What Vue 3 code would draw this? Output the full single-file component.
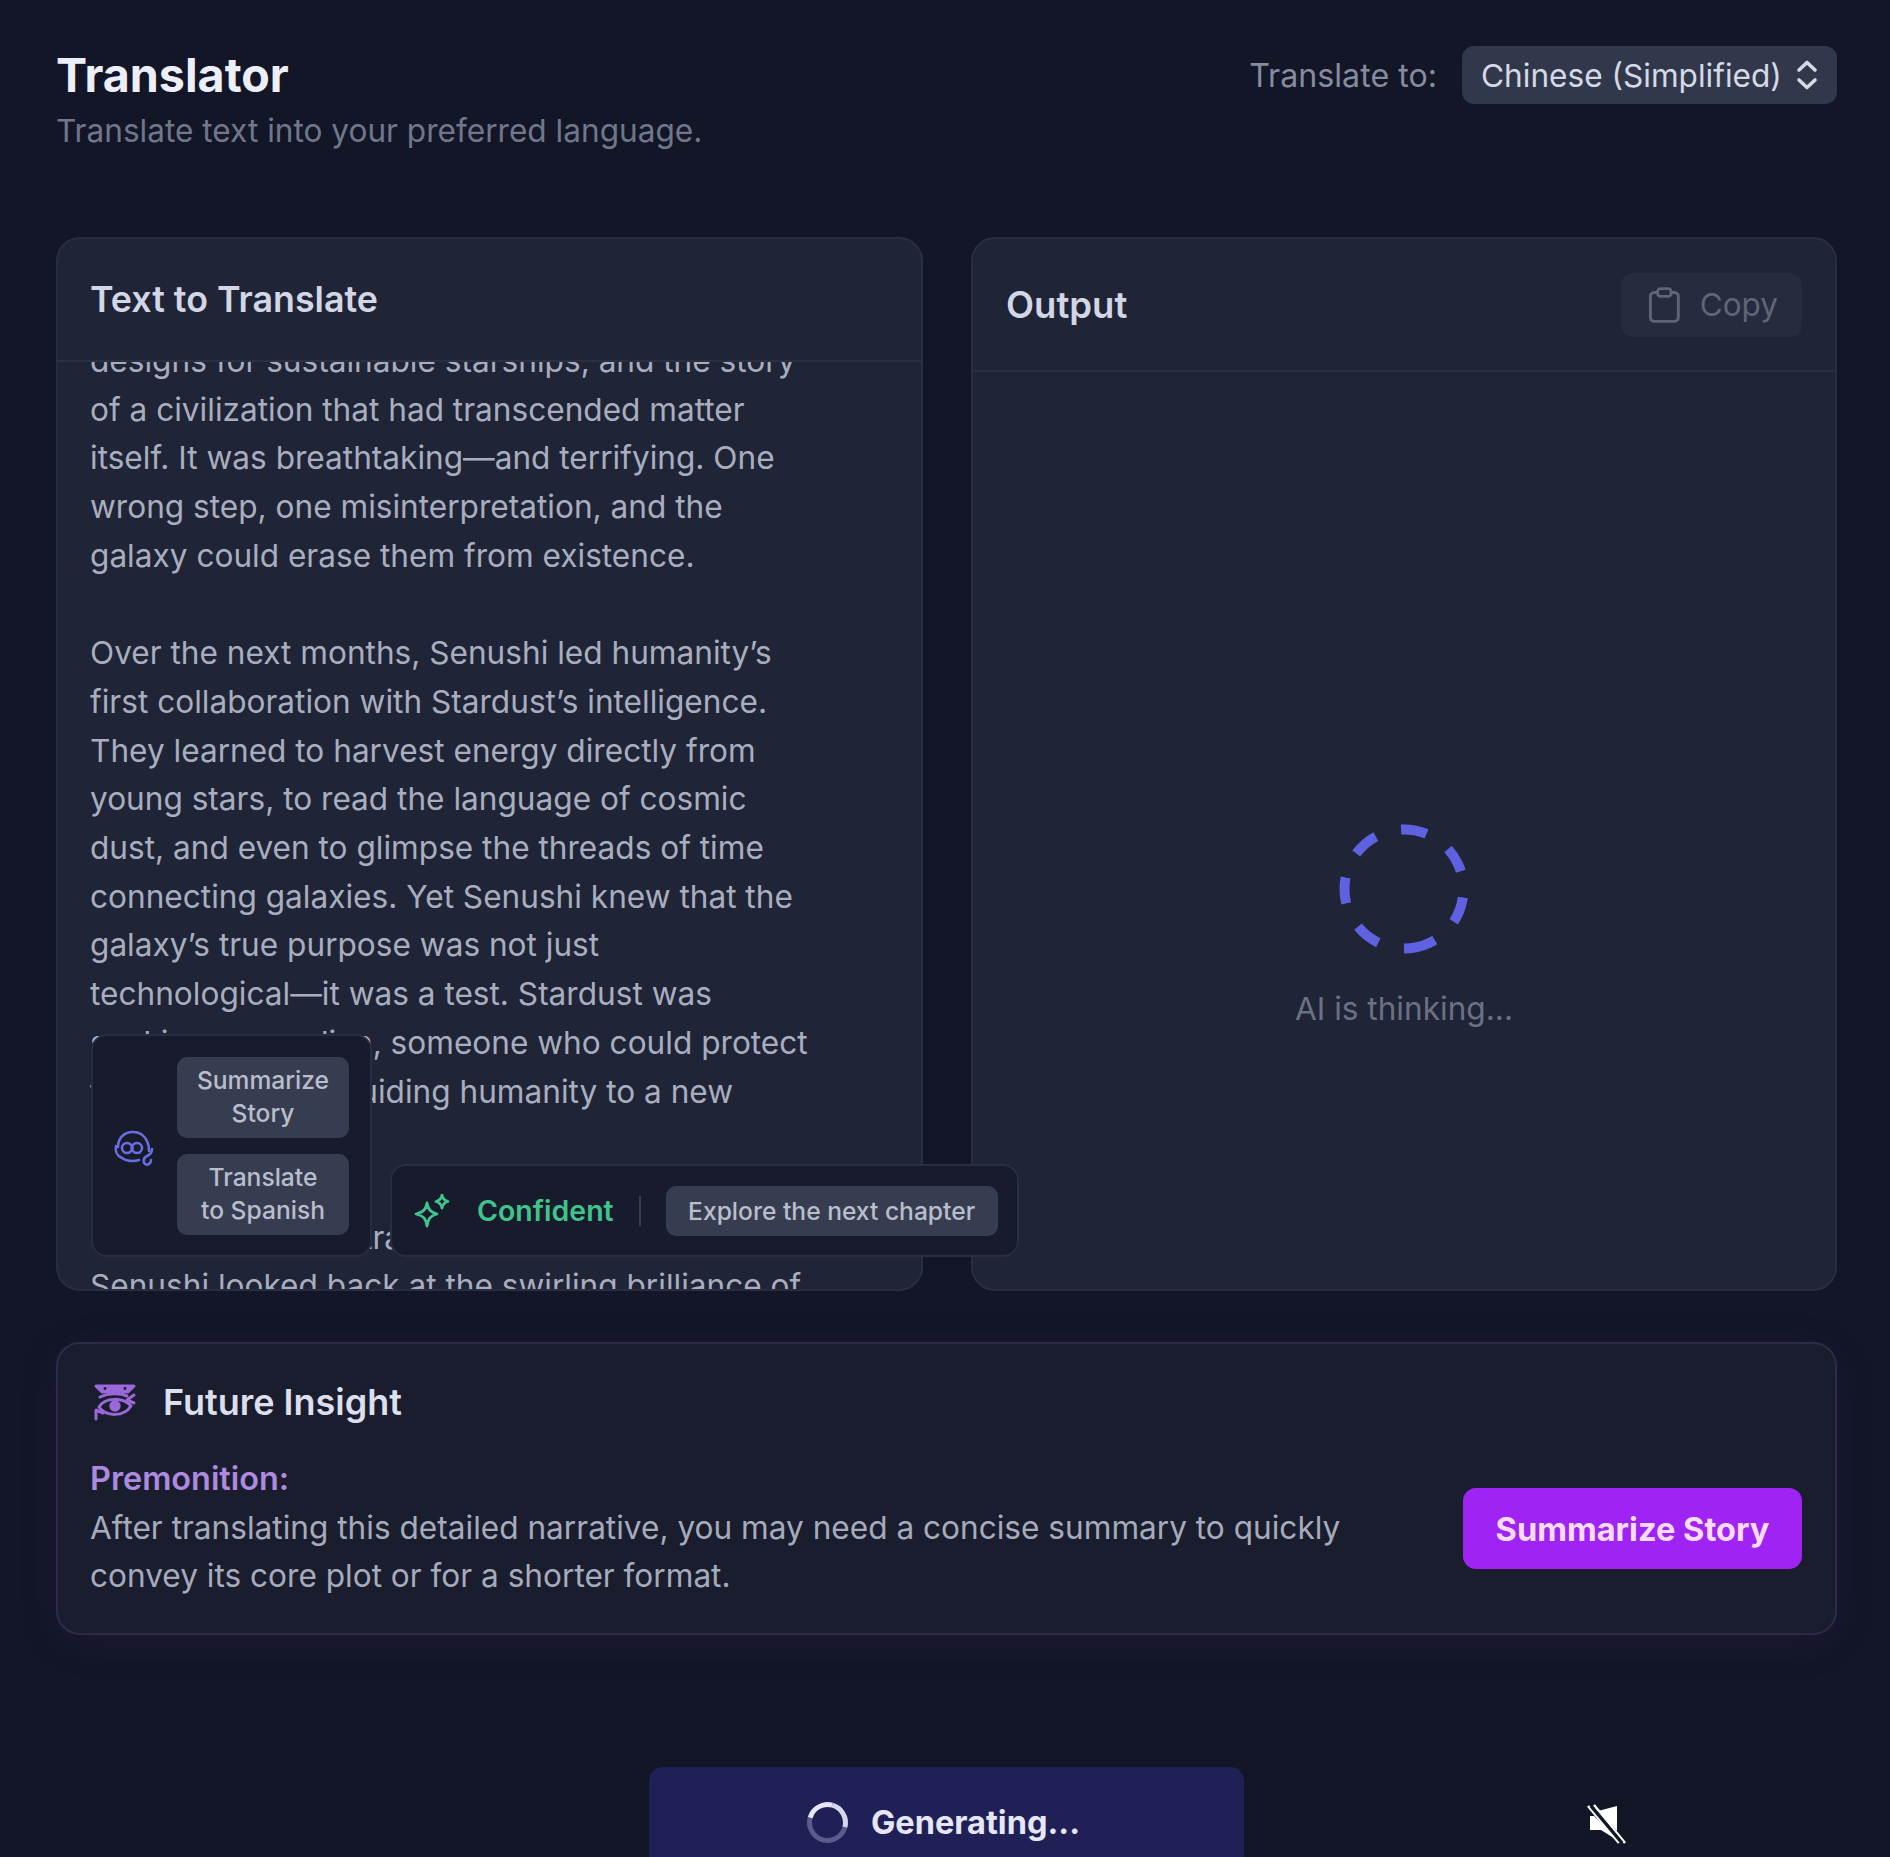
<template>
  <div class="page">
    <header class="top">
      <div class="top-text">
        <h1>Translator</h1>
        <p>Translate text into your preferred language.</p>
      </div>
      <div class="lang">
        <span class="lang-label">Translate to:</span>
        <div class="select">
          <span>Chinese (Simplified)</span>
          <svg width="26" height="32" viewBox="0 0 26 32" fill="none" stroke="#d5d9e6" stroke-width="3.6" stroke-linecap="round" stroke-linejoin="round">
            <path d="M5 11 L13 3.5 L21 11" />
            <path d="M5 21 L13 28.5 L21 21" />
          </svg>
        </div>
      </div>
    </header>

    <section class="panels">
      <div class="panel panel-source">
        <div class="panel-head left-head"><h2>Text to Translate</h2></div>
        <div class="story">
          <div class="story-inner">
            <p v-for="(para, i) in story" :key="i">{{ para }}</p>
          </div>
        </div>

        <div class="floaters">
          <div class="float-box quick">
            <svg class="quick-icon" width="42" height="42" viewBox="0 0 42 42" fill="none" stroke="#6a6de0" stroke-width="2.6" stroke-linecap="round">
              <path d="M5 20 C5 10 12 5 20 5 C29 5 36 12 36 24" />
              <path d="M3 19 C2 24 4 29 9 31 C13 34 20 35 26 33" />
              <circle cx="14" cy="21" r="5" />
              <circle cx="24" cy="21" r="5" />
              <path d="M19 21 H19.5" />
              <path d="M39 22 C39 27 36 28 34 29 C30 31 30 35 32 37 C35 39 38 36 38 33" />
            </svg>
            <div class="quick-btns">
              <button class="chip stacked">Summarize<br />Story</button>
              <button class="chip stacked">Translate<br />to Spanish</button>
            </div>
          </div>
          <div class="float-box mood">
            <svg class="sparkle" width="38" height="34" viewBox="0 0 38 34" fill="none" stroke="#3fc48c" stroke-width="2.8" stroke-linejoin="round">
              <path d="M14 9 C15 15 17 18 24 20 C17 22 15 25 14 32 C13 25 11 22 3 20 C11 18 13 15 14 9 Z" />
              <path d="M29 1 C29.6 5 31 6.5 35 7.5 C31 8.5 29.6 10 29 14 C28.4 10 27 8.5 23 7.5 C27 6.5 28.4 5 29 1 Z" />
            </svg>
            <span class="mood-word">Confident</span>
            <span class="mood-line"></span>
            <button class="chip next">Explore the next chapter</button>
          </div>
        </div>
      </div>

      <div class="panel">
        <div class="panel-head right-head">
          <h2 class="out-title">Output</h2>
          <button class="copy">
            <svg width="34" height="38" viewBox="0 0 34 38" fill="none" stroke="#5f6578" stroke-width="3" stroke-linejoin="round">
              <rect x="2.5" y="6" width="29" height="30" rx="4" />
              <rect x="10" y="2" width="14" height="8" rx="3" fill="#262b3d" />
            </svg>
            <span>Copy</span>
          </button>
        </div>
        <div class="output">
          <svg width="130" height="130" viewBox="0 0 130 130">
            <circle class="dash-ring" cx="65" cy="65" r="59.5" transform="rotate(65 65 65)" />
          </svg>
          <span class="thinking">AI is thinking...</span>
        </div>
      </div>
    </section>

    <section class="insight">
      <div class="insight-title">
        <svg width="44" height="38" viewBox="0 0 44 38" fill="none" stroke="#9a68d8" stroke-width="3" stroke-linecap="round" stroke-linejoin="round">
          <path d="M3 3 H41 L35 9 H9 Z" fill="#9a68d8" />
          <circle cx="12" cy="5.5" r="1.4" fill="#191d2d" stroke="none" />
          <circle cx="32" cy="5.5" r="1.4" fill="#191d2d" stroke="none" />
          <path d="M7 14 C15 10 27 10 34 13" />
          <path d="M41 12 L34 17 L41 20" />
          <path d="M6 24 C12 14 30 14 38 23 C31 34 13 34 6 24 Z" />
          <circle cx="22" cy="23" r="4.2" fill="#9a68d8" />
          <path d="M3 36 V27 L10 30" />
        </svg>
        <h3>Future Insight</h3>
      </div>
      <div class="insight-body">
        <div class="insight-text">
          <strong>Premonition:</strong>
          <p>After translating this detailed narrative, you may need a concise summary to quickly convey its core plot or for a shorter format.</p>
        </div>
        <button class="action">Summarize Story</button>
      </div>
    </section>

    <footer class="bottom">
      <div class="generate">
        <span class="spin"></span>
        <span>Generating...</span>
      </div>
      <svg class="mute" width="40" height="42" viewBox="0 0 40 42">
        <path d="M31 3 V28 L12 8 Z M4 13 H8 L31 36 V37 L15 27 H4 Z" fill="#fff" />
        <path d="M2 3 L33 40 M8 2 L39 40" stroke="#fff" stroke-width="2.6" fill="none" />
        <path d="M5 3 L36 40" stroke="#131727" stroke-width="3.4" fill="none" />
      </svg>
    </footer>
  </div>
</template>

<script setup>
const story = [
  'designs for sustainable starships, and the story of a civilization that had transcended matter itself. It was breathtaking—and terrifying. One wrong step, one misinterpretation, and the galaxy could erase them from existence.',
  'Over the next months, Senushi led humanity’s first collaboration with Stardust’s intelligence. They learned to harvest energy directly from young stars, to read the language of cosmic dust, and even to glimpse the threads of time connecting galaxies. Yet Senushi knew that the galaxy’s true purpose was not just\ntechnological—it was a test. Stardust was\nseeking a guardian, someone who could protect the galaxy while guiding humanity to a new\nera.',
  'On the last day of training at the ancient core, Senushi looked back at the swirling brilliance of'
]
</script>

<style>
html, body { background: #121626; }
</style>

<style scoped>
* { box-sizing: border-box; }

.page {
  width: 1890px;
  height: 1857px;
  overflow: hidden;
  padding: 46px 53px 0 56px;
  background: #121626;
  color: #e5e7f0;
  font-family: Inter, "Noto Sans", sans-serif;
}

button { font-family: inherit; border: none; }

.top { display: flex; justify-content: space-between; align-items: flex-start; height: 191px; }
h1 { margin: 0; font-size: 46.6px; line-height: 58px; font-weight: 700; color: #eceefa; }
.top-text p { margin: 0; font-size: 31.6px; line-height: 54px; color: #71778b; }

.lang { display: flex; align-items: center; gap: 25px; }
.lang-label { font-size: 32.2px; color: #868c9f; }
.select {
  display: flex; align-items: center; justify-content: space-between;
  width: 375px; height: 58px; padding: 0 17px 0 19px;
  background: #31384c; border-radius: 12px;
  font-size: 31.6px; color: #d5d9e6;
}

.panels { display: grid; grid-template-columns: 867px 866px; grid-template-rows: 1054px; gap: 48px; height: 1054px; }
.panel {
  position: relative; display: flex; flex-direction: column; min-height: 0;
  background: #1f2436; border: 2px solid #282e40; border-radius: 24px;
}
.panel-source { z-index: 2; }
.panel-head { display: flex; align-items: center; justify-content: space-between; border-bottom: 2px solid #2a3042; padding: 0 33px 0 32px; flex-shrink: 0; }
.left-head { height: 123px; padding-bottom: 2px; }
.right-head { height: 133px; padding-left: 33px; }
h2 { margin: 0; font-size: 35.8px; font-weight: 600; color: #d3d6e4; }
.out-title { font-size: 36.5px; }

.story { flex: 1; min-height: 0; overflow: hidden; padding: 0 32px; border-radius: 0 0 22px 22px; }
.story-inner { width: 725px; margin-top: -25px; font-size: 31.6px; line-height: 48.7px; color: #a9aebf; }
.story-inner p { margin: 0 0 48.7px; white-space: pre-line; }

.floaters { position: absolute; left: 33px; bottom: 32px; display: flex; align-items: flex-end; gap: 18px; }
.float-box { background: #171b2c; border: 2px solid #282e40; border-radius: 16px; }
.quick { display: flex; align-items: center; width: 281px; height: 223px; padding: 0 20px 0 20px; gap: 24px; }
.quick-icon { flex-shrink: 0; margin-top: 5px; margin-right: -2px; }
.quick-btns { display: flex; flex-direction: column; gap: 16px; }
.chip { background: #373d50; border-radius: 10px; color: #b9bdcc; font-weight: 500; font-size: 24.6px; }
.stacked { width: 172px; height: 81px; line-height: 33px; padding: 0; }
.mood { display: flex; align-items: center; width: 629px; height: 93px; padding: 0 18px 0 21px; }
.sparkle { flex-shrink: 0; }
.mood-word { margin-left: 26px; font-size: 28.5px; font-weight: 600; color: #3fc48c; }
.mood-line { width: 2px; height: 30px; margin: 0 25px; background: #373d50; }
.next { width: 332px; height: 50px; white-space: nowrap; padding: 0; font-size: 24.6px; }

.copy {
  display: flex; align-items: center; gap: 19px;
  width: 181px; height: 64px; padding: 0 24px 0 27px;
  background: #262b3d; border-radius: 12px;
  font-size: 31.5px; color: #5f6578;
}

.output { flex: 1; display: flex; flex-direction: column; align-items: center; padding-top: 452px; }
.dash-ring { fill: none; stroke: #5f62e0; stroke-width: 10; stroke-dasharray: 26 26.4; }
.thinking { margin-top: 35px; font-size: 31.6px; color: #6b7184; }

.insight {
  margin-top: 51px; height: 293px; padding: 31px 33px 0 32px;
  background: #191d2d; border: 2px solid #302a4a; border-radius: 24px;
  box-shadow: 0 8px 40px rgba(110, 40, 180, 0.12);
}
.insight-title { display: flex; align-items: center; gap: 26px; margin-left: 3px; height: 54px; }
h3 { margin: 0; font-size: 36px; font-weight: 600; color: #dcdfec; }
.insight-body { display: flex; align-items: flex-end; justify-content: space-between; margin-top: 26px; }
.insight-text { width: 1300px; font-size: 31.6px; line-height: 48.7px; color: #a6abbc; }
.insight-text strong { display: block; font-size: 32.4px; font-weight: 600; color: #ad8adf; }
.insight-text p { margin: 0; }
.action {
  width: 339px; height: 81px; margin-bottom: 32px;
  background: #9f24f3; border-radius: 13px;
  font-size: 32.6px; font-weight: 700; color: #fbdcff;
}

.bottom { display: grid; grid-template-columns: 593px 595px 1fr; margin-top: 132px; }
.generate {
  grid-column: 2; display: flex; align-items: center; justify-content: center; gap: 23px;
  height: 110px; padding-right: 6px; background: #1f2055; border-radius: 14px 14px 0 0;
  font-size: 32.5px; font-weight: 700; color: #e6e6f8;
}
.spin {
  width: 41px; height: 41px; border-radius: 50%;
  border: 5px solid #5a5c8e; border-top-color: #e6e6f8; border-right-color: #d6d6ee;
  transform: rotate(-30deg);
}
.mute { grid-column: 3; margin: 36px 0 0 342px; }
</style>
